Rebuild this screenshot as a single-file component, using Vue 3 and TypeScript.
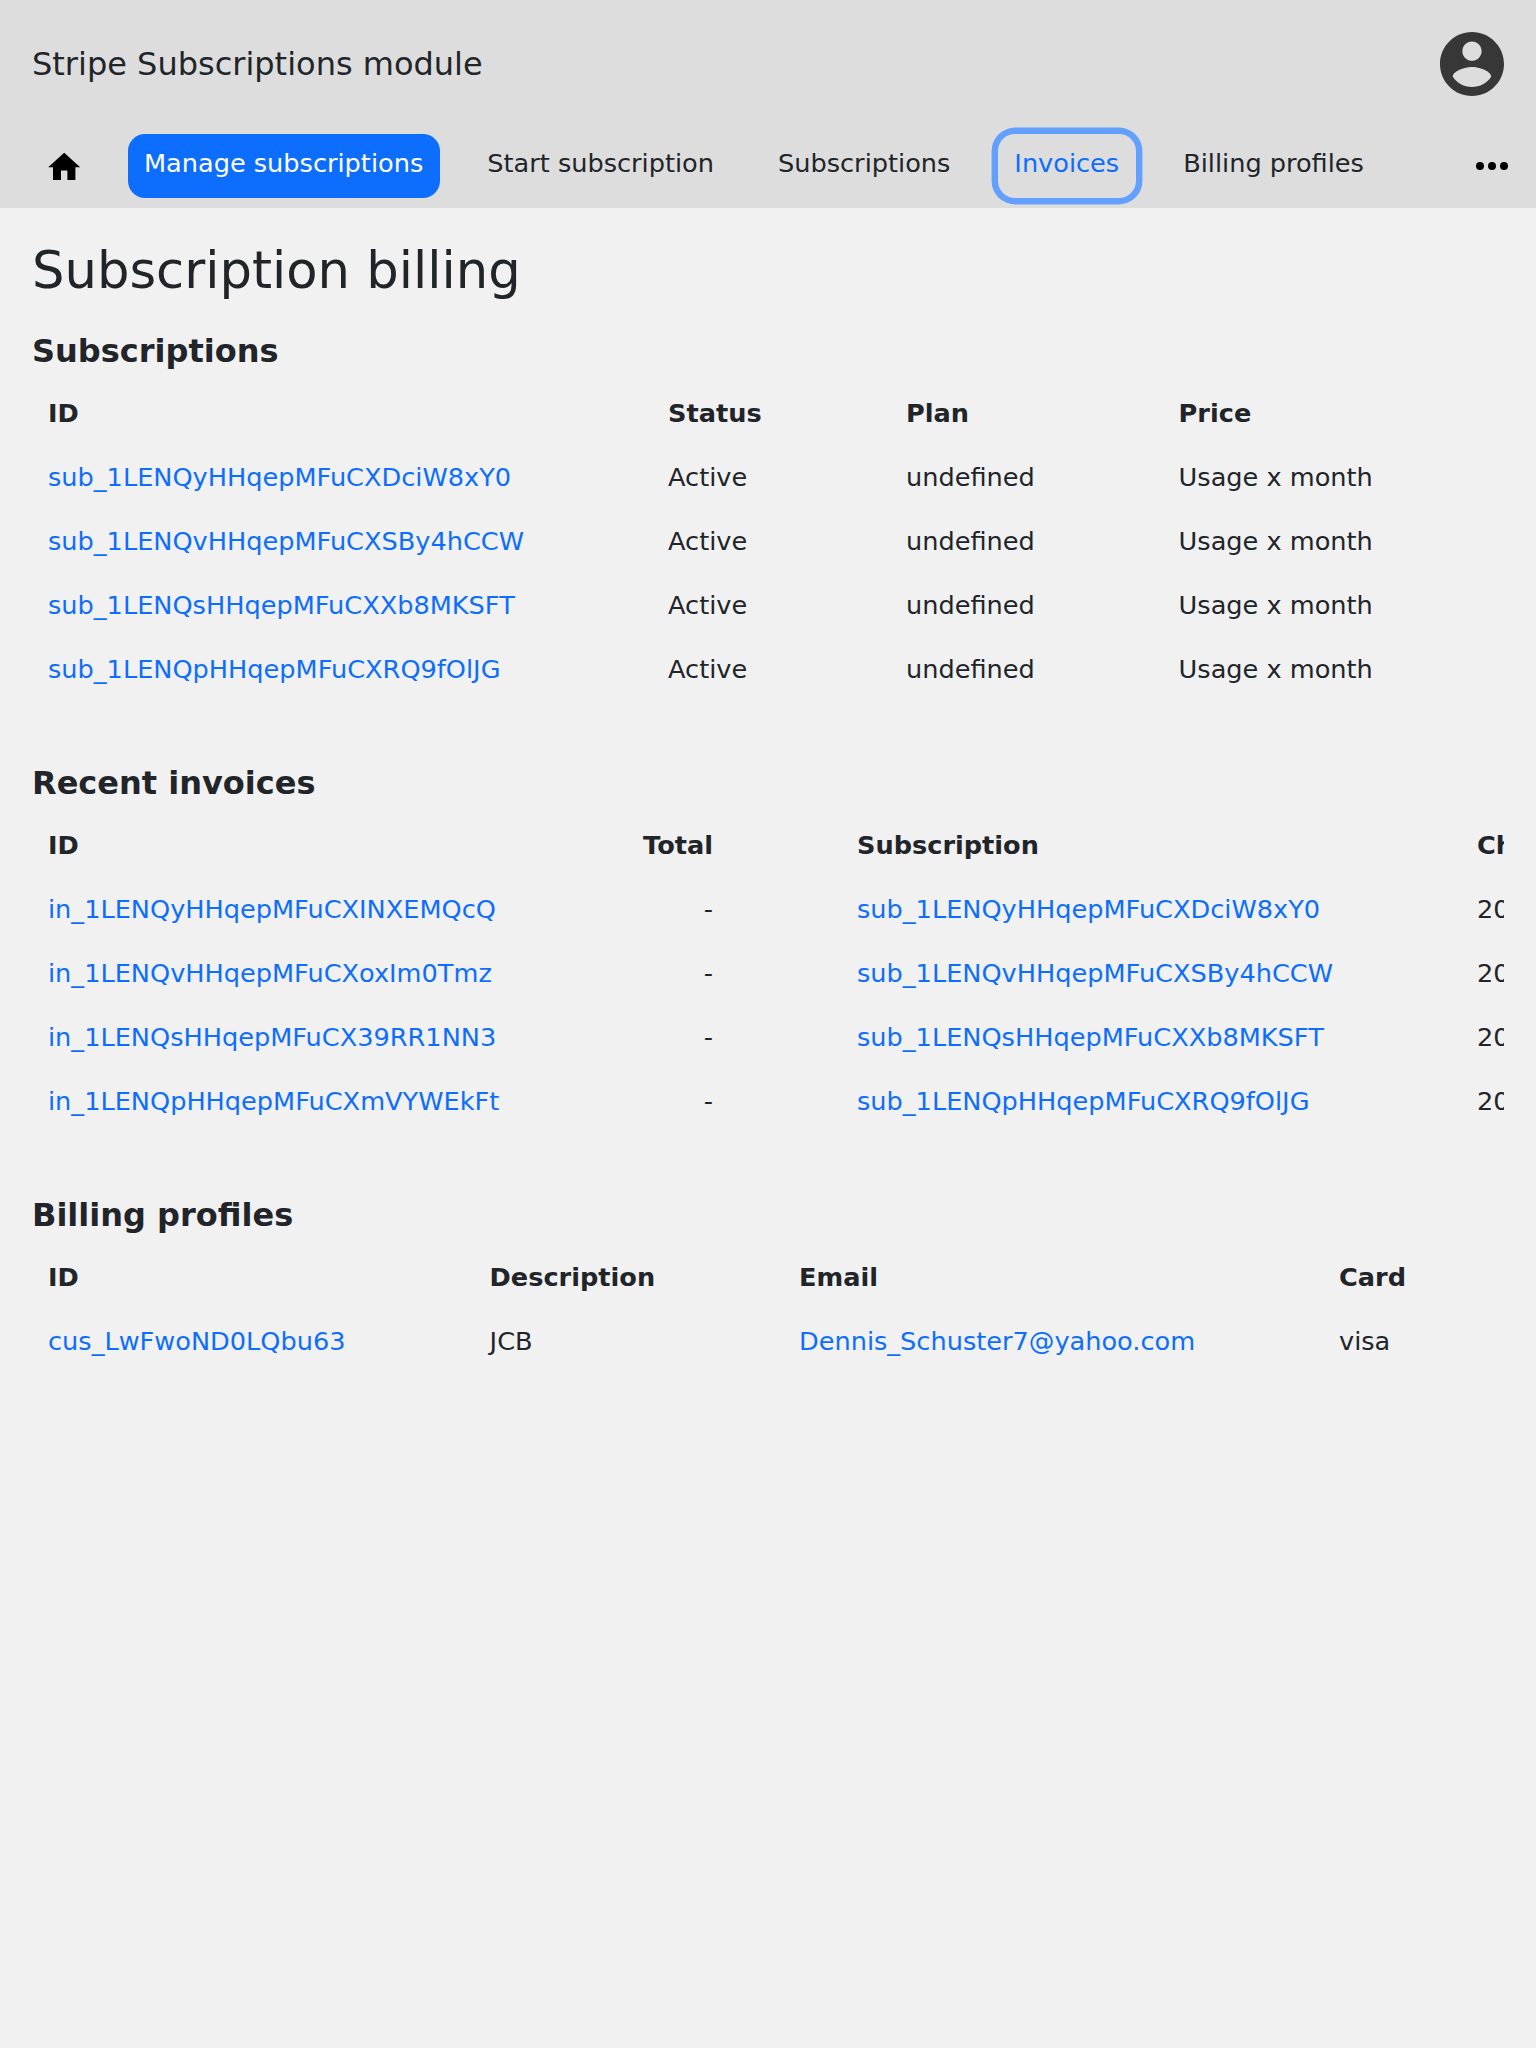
<script setup lang="ts">
interface Sub { id: string; status: string; plan: string; price: string }
interface Invoice { id: string; total: string; subscription: string; changed: string }

const navItems = ['Manage subscriptions', 'Start subscription', 'Subscriptions', 'Invoices', 'Billing profiles']

const subs: Sub[] = [
  { id: 'sub_1LENQyHHqepMFuCXDciW8xY0', status: 'Active', plan: 'undefined', price: 'Usage x month' },
  { id: 'sub_1LENQvHHqepMFuCXSBy4hCCW', status: 'Active', plan: 'undefined', price: 'Usage x month' },
  { id: 'sub_1LENQsHHqepMFuCXXb8MKSFT', status: 'Active', plan: 'undefined', price: 'Usage x month' },
  { id: 'sub_1LENQpHHqepMFuCXRQ9fOlJG', status: 'Active', plan: 'undefined', price: 'Usage x month' }
]

const invoices: Invoice[] = [
  { id: 'in_1LENQyHHqepMFuCXINXEMQcQ', total: '-', subscription: 'sub_1LENQyHHqepMFuCXDciW8xY0', changed: '2022-06-24' },
  { id: 'in_1LENQvHHqepMFuCXoxIm0Tmz', total: '-', subscription: 'sub_1LENQvHHqepMFuCXSBy4hCCW', changed: '2022-06-24' },
  { id: 'in_1LENQsHHqepMFuCX39RR1NN3', total: '-', subscription: 'sub_1LENQsHHqepMFuCXXb8MKSFT', changed: '2022-06-24' },
  { id: 'in_1LENQpHHqepMFuCXmVYWEkFt', total: '-', subscription: 'sub_1LENQpHHqepMFuCXRQ9fOlJG', changed: '2022-06-24' }
]
</script>

<template>
  <div class="page">
    <header class="topbar">
      <div class="brand-row">
        <span class="brand">Stripe Subscriptions module</span>
        <svg class="avatar" viewBox="2 2 20 20" fill="#373737">
          <path d="M12 2C6.48 2 2 6.48 2 12s4.48 10 10 10 10-4.48 10-10S17.52 2 12 2zm0 3c1.66 0 3 1.34 3 3s-1.34 3-3 3-3-1.34-3-3 1.34-3 3-3zm0 14.2c-2.5 0-4.71-1.28-6-3.22.03-1.99 4-3.08 6-3.08 1.99 0 5.97 1.09 6 3.08-1.29 1.94-3.5 3.22-6 3.22z" />
        </svg>
      </div>
      <nav class="nav">
        <svg class="home" viewBox="0 0 24 24" fill="#000"><path d="M10 20v-6h4v6h5v-8h3L12 3 2 12h3v8z" /></svg>
        <a v-for="(item, i) in navItems" :key="item" class="nav-link" :class="{ active: i === 0, focused: item === 'Invoices' }">{{ item }}</a>
        <svg class="more" viewBox="0 0 32 8" fill="#000">
          <circle cx="4" cy="4" r="4" />
          <circle cx="16" cy="4" r="4" />
          <circle cx="28" cy="4" r="4" />
        </svg>
      </nav>
    </header>

    <main class="content">
      <h1>Subscription billing</h1>

      <h2>Subscriptions</h2>
      <table class="tbl subs">
        <colgroup><col class="c1" /><col class="c2" /><col class="c3" /><col class="c4" /></colgroup>
        <thead><tr><th>ID</th><th>Status</th><th>Plan</th><th>Price</th></tr></thead>
        <tbody>
          <tr v-for="s in subs" :key="s.id">
            <td><a class="link">{{ s.id }}</a></td><td>{{ s.status }}</td><td>{{ s.plan }}</td><td>{{ s.price }}</td>
          </tr>
        </tbody>
      </table>

      <h2>Recent invoices</h2>
      <div class="scroller">
        <table class="tbl wide">
          <colgroup><col class="c1" /><col class="c2" /><col class="c3" /><col class="c4" /></colgroup>
          <thead><tr><th>ID</th><th class="num">Total</th><th>Subscription</th><th>Changed</th></tr></thead>
          <tbody>
            <tr v-for="inv in invoices" :key="inv.id">
              <td><a class="link">{{ inv.id }}</a></td><td class="num">{{ inv.total }}</td><td><a class="link">{{ inv.subscription }}</a></td><td>{{ inv.changed }}</td>
            </tr>
          </tbody>
        </table>
      </div>

      <h2>Billing profiles</h2>
      <table class="tbl profiles">
        <colgroup><col class="c1" /><col class="c2" /><col class="c3" /><col class="c4" /></colgroup>
        <thead><tr><th>ID</th><th>Description</th><th>Email</th><th>Card</th></tr></thead>
        <tbody>
          <tr>
            <td><a class="link">cus_LwFwoND0LQbu63</a></td><td>JCB</td><td><a class="link">Dennis_Schuster7@yahoo.com</a></td><td>visa</td>
          </tr>
        </tbody>
      </table>
    </main>
  </div>
</template>

<style>
body { margin: 0; background: #f1f1f1; }
</style>

<style scoped>
.page { min-height: 2048px; background: #f1f1f1; color: #212529; font-family: "DejaVu Sans", sans-serif; font-size: 25.6px; line-height: 38.4px; }
.topbar { height: 208px; background: #dddddd; box-sizing: border-box; padding: 32px 32px 0; }
.brand-row { display: flex; align-items: center; justify-content: space-between; height: 64px; }
.brand { font-size: 32px; line-height: 40px; }
.avatar { width: 64px; height: 64px; }
.nav { display: flex; align-items: center; margin-top: 38px; height: 64px; }
.home { width: 38.4px; height: 38.4px; margin: 3px 44.8px 0 12.8px; }
.nav-link { box-sizing: border-box; height: 64px; padding: 10px 16.8px 15.6px 16px; margin-right: 31.2px; border-radius: 17px; white-space: nowrap; color: #212529; }
.nav-link.active { background: #0d6efd; color: #fff; }
.nav-link.focused { color: #0d6efd; box-shadow: 0 0 0 6.4px #629ffe; }
.more { width: 32px; height: 8px; margin-left: auto; margin-right: -4px; }
.content { padding: 30px 32px 0; }
h1 { margin: 0; font-size: 51.2px; line-height: 64px; font-weight: 400; }
h2 { margin: 0 0 8px; font-size: 32px; line-height: 48px; font-weight: 700; }
.content h1 + h2 { margin-top: 25px; }
.tbl + h2, .scroller + h2 { margin-top: 56px; }
.tbl { border-collapse: collapse; table-layout: fixed; width: 1472px; }
.subs .c1 { width: 620px; }
.subs .c2 { width: 238px; }
.subs .c3 { width: 272.6px; }
.subs .c4 { width: 341.4px; }
.wide { width: 1629px; }
.wide .c1 { width: 590px; }
.wide .c2 { width: 219px; }
.wide .c3 { width: 620px; }
.wide .c4 { width: 200px; }
.profiles .c1 { width: 441.6px; }
.profiles .c2 { width: 309.4px; }
.profiles .c3 { width: 540px; }
.profiles .c4 { width: 181px; }
.scroller { overflow: hidden; width: 1472px; }
th, td { padding: 10.8px 16px 14.8px; text-align: left; white-space: nowrap; }
.num { text-align: right; padding-right: 128px; }
.link { color: #0d6efd; }
</style>
